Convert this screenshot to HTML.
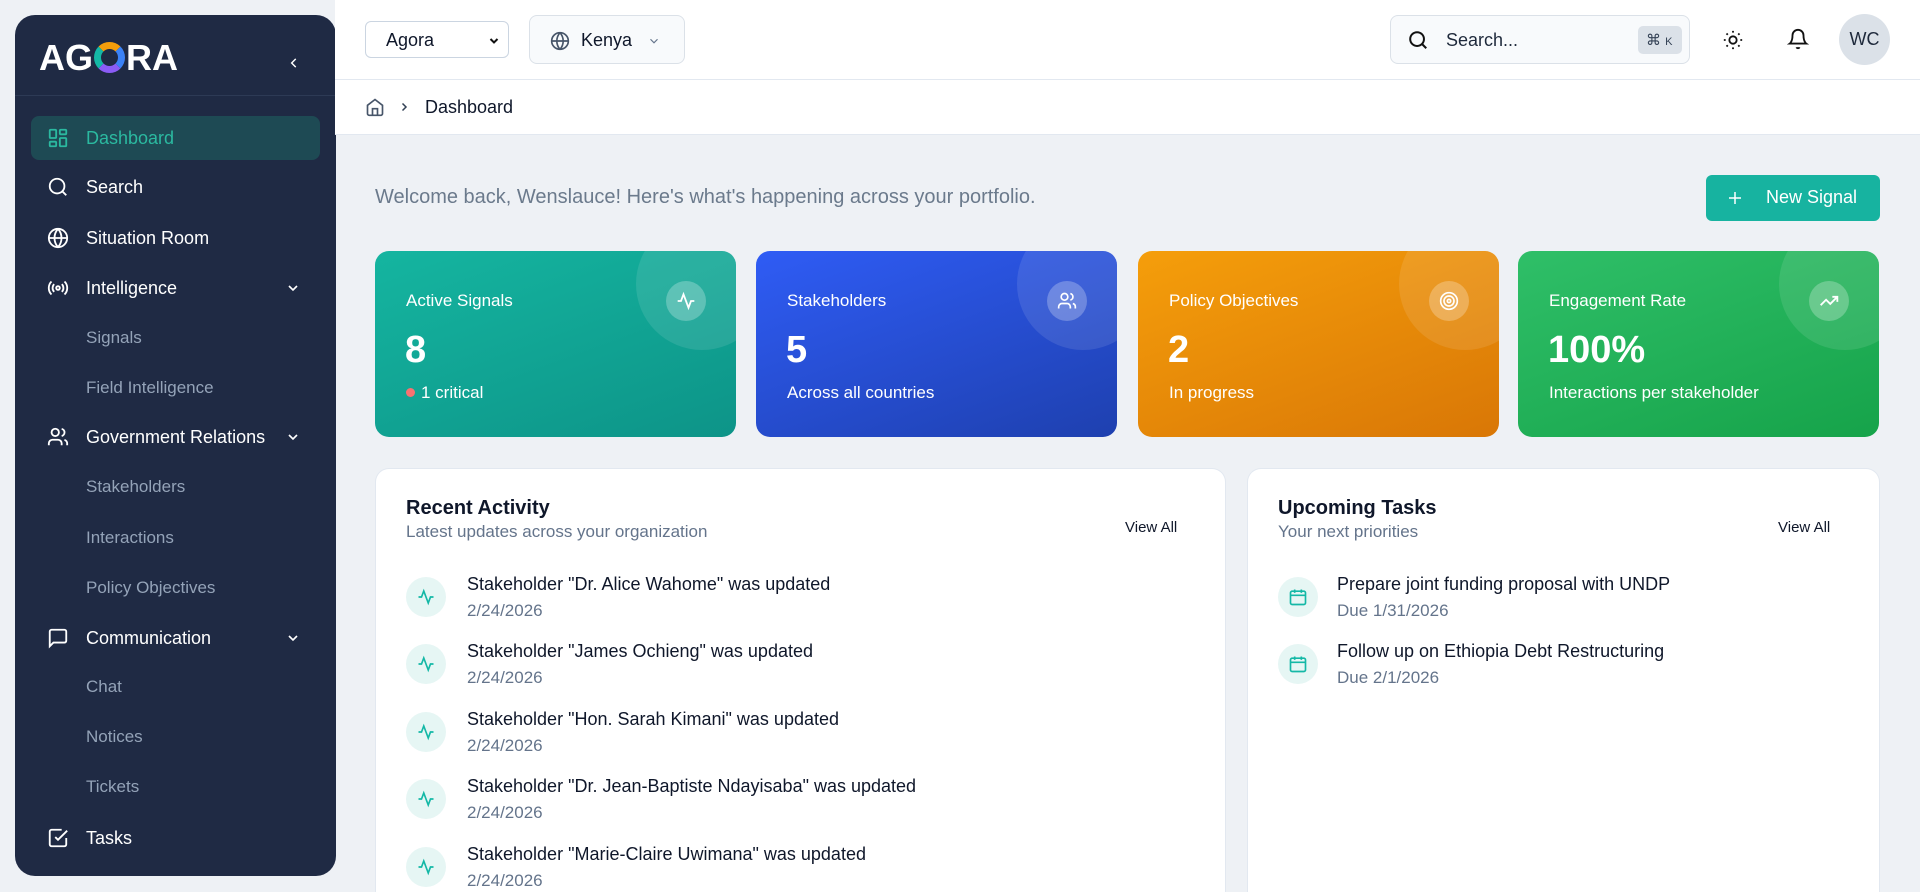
<!DOCTYPE html>
<html style="width:1920px;height:892px;overflow:hidden"><head><meta charset="utf-8"><style>
*{box-sizing:border-box;margin:0;padding:0}
body{width:1920px;height:892px;overflow:hidden;background:#eef1f5;font-family:"Liberation Sans",sans-serif;position:relative;color:#0f172a}
.a{position:absolute}
.sb{left:15px;top:15px;width:321px;height:861px;background:#1f2a44;border-radius:20px;overflow:hidden}
.mi{position:absolute;left:0;width:321px;height:40px;display:flex;align-items:center;color:#fff;font-size:18px}
.mi svg{position:absolute;left:32px}
.mi span{position:absolute;left:71px}
.sub{color:#94a3b8;font-size:17px}
.mi .chev{position:absolute;left:270px}
.top{left:335px;top:0;width:1585px;height:80px;background:#fff;border-bottom:1px solid #e2e8f0}
.bc{left:335px;top:80px;width:1585px;height:55px;background:#fff;border-bottom:1px solid #e2e8f0}
.card{top:251px;width:361px;height:186px;border-radius:14px;overflow:hidden;color:#fff}
.card .ring{position:absolute;left:261px;top:-33px;width:132px;height:132px;border-radius:50%;background:rgba(255,255,255,.1)}
.card .ic{position:absolute;left:291px;top:30px;width:40px;height:40px;border-radius:50%;background:rgba(255,255,255,.25);display:flex;align-items:center;justify-content:center}
.card .t{position:absolute;left:31px;top:40px;font-size:17px}
.card .n{position:absolute;left:30px;top:78px;font-size:38px;font-weight:bold}
.card .s{position:absolute;left:31px;top:132px;font-size:17px}
.panel{top:468px;height:424px;background:#fff;border:1px solid #e2e8f0;border-bottom:none;border-radius:14px 14px 0 0}
.ph{font-size:20px;font-weight:bold;color:#0f172a}
.ps{font-size:17px;color:#64748b}
.va{font-size:15px;color:#0f172a}
.it .c{position:absolute;width:40px;height:40px;border-radius:50%;background:#e6f6f4;display:flex;align-items:center;justify-content:center}
.it .l1{position:absolute;font-size:18px;color:#0f172a;white-space:nowrap}
.it .l2{position:absolute;font-size:17px;color:#64748b}
</style></head><body>

<div class="a sb">
  <div class="a" style="left:24px;top:22px;font-size:36px;font-weight:bold;color:#fff;letter-spacing:0px">AG<span style="display:inline-block;width:31px;height:31px;border-radius:50%;border:7px solid;border-color:#f59e0b #3b82f6 #8b5cf6 #14b8a6;vertical-align:-3px;margin:0 1px"></span>RA</div>
  <svg class="a" style="left:272px;top:41px" width="14" height="14" viewBox="0 0 24 24" fill="none" stroke="#fff" stroke-width="2.5"><path d="M15 5l-7 7 7 7"/></svg>
  <div class="a" style="left:0;top:80px;width:321px;height:1px;background:#2d3a55"></div>
  <div class="a" style="left:16px;top:101px;width:289px;height:44px;background:#1e4a54;border-radius:8px"></div>
  <div class="mi" style="top:103px;color:#2bb9a0"><svg width="22" height="22" viewBox="0 0 24 24" fill="none" stroke="#2bb9a0" stroke-width="2"><rect x="3" y="3" width="7" height="9" rx="1"/><rect x="14" y="3" width="7" height="5" rx="1"/><rect x="14" y="12" width="7" height="9" rx="1"/><rect x="3" y="16" width="7" height="5" rx="1"/></svg><span>Dashboard</span></div>
  <div class="mi" style="top:152px"><svg width="22" height="22" viewBox="0 0 24 24" fill="none" stroke="#fff" stroke-width="2"><circle cx="11" cy="11" r="8"/><path d="M21 21l-4.3-4.3"/></svg><span>Search</span></div>
  <div class="mi" style="top:203px"><svg width="22" height="22" viewBox="0 0 24 24" fill="none" stroke="#fff" stroke-width="2"><circle cx="12" cy="12" r="10"/><path d="M2 12h20M12 2a15 15 0 0 1 0 20M12 2a15 15 0 0 0 0 20"/></svg><span>Situation Room</span></div>
  <div class="mi" style="top:253px"><svg width="22" height="22" viewBox="0 0 24 24" fill="none" stroke="#fff" stroke-width="2"><circle cx="12" cy="12" r="2"/><path d="M16.2 7.8a6 6 0 0 1 0 8.4M7.8 16.2a6 6 0 0 1 0-8.4M19.1 4.9a10 10 0 0 1 0 14.2M4.9 19.1a10 10 0 0 1 0-14.2"/></svg><span>Intelligence</span><svg class="chev" width="16" height="16" viewBox="0 0 24 24" fill="none" stroke="#fff" stroke-width="2.5"><path d="M6 9l6 6 6-6"/></svg></div>
  <div class="mi sub" style="top:303px"><span>Signals</span></div>
  <div class="mi sub" style="top:353px"><span>Field Intelligence</span></div>
  <div class="mi" style="top:402px"><svg width="22" height="22" viewBox="0 0 24 24" fill="none" stroke="#fff" stroke-width="2"><circle cx="9" cy="7" r="4"/><path d="M2 21v-2a4 4 0 0 1 4-4h6a4 4 0 0 1 4 4v2M16 3.1a4 4 0 0 1 0 7.8M22 21v-2a4 4 0 0 0-3-3.9"/></svg><span>Government Relations</span><svg class="chev" width="16" height="16" viewBox="0 0 24 24" fill="none" stroke="#fff" stroke-width="2.5"><path d="M6 9l6 6 6-6"/></svg></div>
  <div class="mi sub" style="top:452px"><span>Stakeholders</span></div>
  <div class="mi sub" style="top:503px"><span>Interactions</span></div>
  <div class="mi sub" style="top:553px"><span>Policy Objectives</span></div>
  <div class="mi" style="top:603px"><svg width="22" height="22" viewBox="0 0 24 24" fill="none" stroke="#fff" stroke-width="2"><path d="M21 15a2 2 0 0 1-2 2H7l-4 4V5a2 2 0 0 1 2-2h14a2 2 0 0 1 2 2z"/></svg><span>Communication</span><svg class="chev" width="16" height="16" viewBox="0 0 24 24" fill="none" stroke="#fff" stroke-width="2.5"><path d="M6 9l6 6 6-6"/></svg></div>
  <div class="mi sub" style="top:652px"><span>Chat</span></div>
  <div class="mi sub" style="top:702px"><span>Notices</span></div>
  <div class="mi sub" style="top:752px"><span>Tickets</span></div>
  <div class="mi" style="top:803px"><svg width="22" height="22" viewBox="0 0 24 24" fill="none" stroke="#fff" stroke-width="2"><path d="M9 11l3 3L22 4"/><path d="M21 12v7a2 2 0 0 1-2 2H5a2 2 0 0 1-2-2V5a2 2 0 0 1 2-2h11"/></svg><span>Tasks</span></div>
</div>

<div class="a top"></div>
<div class="a" style="left:365px;top:21px;width:144px;height:37px;border:1px solid #cbd5e1;border-radius:6px;background:#fff;font-size:18px;padding:8px 0 0 20px">Agora<svg class="a" style="left:122px;top:13px" width="12" height="12" viewBox="0 0 24 24" fill="none" stroke="#111" stroke-width="4"><path d="M5 8l7 7 7-7"/></svg></div>
<div class="a" style="left:529px;top:15px;width:156px;height:49px;border:1px solid #dbe1e8;border-radius:8px;background:#f8fafc;font-size:18px;padding:14px 0 0 51px">Kenya
<svg class="a" style="left:20px;top:15px" width="20" height="20" viewBox="0 0 24 24" fill="none" stroke="#475569" stroke-width="2"><circle cx="12" cy="12" r="10"/><path d="M2 12h20M12 2a15 15 0 0 1 0 20M12 2a15 15 0 0 0 0 20"/></svg>
<svg class="a" style="left:117px;top:18px" width="14" height="14" viewBox="0 0 24 24" fill="none" stroke="#64748b" stroke-width="2"><path d="M6 9l6 6 6-6"/></svg></div>

<div class="a" style="left:1390px;top:15px;width:300px;height:49px;border:1px solid #dbe1e8;border-radius:8px;background:#f8fafc">
<svg class="a" style="left:16px;top:13px" width="22" height="22" viewBox="0 0 24 24" fill="none" stroke="#111" stroke-width="2.2"><circle cx="11" cy="11" r="7.5"/><path d="M21 21l-4.5-4.5"/></svg>
<div class="a" style="left:55px;top:14px;font-size:18px;color:#1e293b">Search...</div>
<div class="a" style="left:247px;top:10px;width:44px;height:28px;background:#dbe1e8;border-radius:5px;font-size:15px;padding:5px 0 0 8px;color:#334155">⌘ <span style="font-size:11px">K</span></div>
</div>
<svg class="a" style="left:1722px;top:29px" width="22" height="22" viewBox="0 0 24 24" fill="none" stroke="#111" stroke-width="2"><circle cx="12" cy="12" r="4"/><path d="M12 2v2M12 20v2M4.9 4.9l1.4 1.4M17.7 17.7l1.4 1.4M2 12h2M20 12h2M4.9 19.1l1.4-1.4M17.7 6.3l1.4-1.4"/></svg>
<svg class="a" style="left:1787px;top:28px" width="22" height="22" viewBox="0 0 24 24" fill="none" stroke="#111" stroke-width="2"><path d="M6 8a6 6 0 0 1 12 0c0 7 3 9 3 9H3s3-2 3-9M10.3 21a1.9 1.9 0 0 0 3.4 0"/></svg>
<div class="a" style="left:1839px;top:14px;width:51px;height:51px;border-radius:50%;background:#dbe1e8;font-size:18px;color:#1e293b;text-align:center;line-height:51px">WC</div>

<div class="a bc"></div>
<svg class="a" style="left:365px;top:97px" width="20" height="20" viewBox="0 0 24 24" fill="none" stroke="#475569" stroke-width="2"><path d="M3 10l9-7 9 7v10a2 2 0 0 1-2 2H5a2 2 0 0 1-2-2z"/><path d="M9 22v-8h6v8"/></svg>
<svg class="a" style="left:398px;top:101px" width="12" height="12" viewBox="0 0 24 24" fill="none" stroke="#334155" stroke-width="3"><path d="M9 5l7 7-7 7"/></svg>
<div class="a" style="left:425px;top:97px;font-size:18px">Dashboard</div>

<div class="a" style="left:375px;top:186px;font-size:20px;color:#6b7a8c">Welcome back, Wenslauce! Here's what's happening across your portfolio.</div>
<div class="a" style="left:1706px;top:175px;width:174px;height:46px;background:#17b3a0;border-radius:6px;color:#fff;font-size:18px;padding:12px 0 0 60px">New Signal
<svg class="a" style="left:20px;top:14px" width="18" height="18" viewBox="0 0 24 24" fill="none" stroke="#fff" stroke-width="2"><path d="M12 4v16M4 12h16"/></svg></div>

<div class="a card" style="left:375px;background:linear-gradient(160deg,#15b5a0,#0d9488)"><div class="ring"></div><div class="ic"><svg width="20" height="20" viewBox="0 0 24 24" fill="none" stroke="#fff" stroke-width="2.2"><path d="M22 12h-4l-3 8-6-16-3 8H2"/></svg></div><div class="t">Active Signals</div><div class="n">8</div><div class="s"><span style="display:inline-block;width:9px;height:9px;border-radius:50%;background:#f87171;margin-right:6px;vertical-align:1px"></span>1 critical</div></div>
<div class="a card" style="left:756px;background:linear-gradient(160deg,#2f5cf5,#1e40af)"><div class="ring"></div><div class="ic"><svg width="20" height="20" viewBox="0 0 24 24" fill="none" stroke="#fff" stroke-width="2"><circle cx="9" cy="7" r="4"/><path d="M2 21v-2a4 4 0 0 1 4-4h6a4 4 0 0 1 4 4v2M16 3.1a4 4 0 0 1 0 7.8M22 21v-2a4 4 0 0 0-3-3.9"/></svg></div><div class="t">Stakeholders</div><div class="n">5</div><div class="s">Across all countries</div></div>
<div class="a card" style="left:1138px;background:linear-gradient(160deg,#f59e0b,#d97706)"><div class="ring"></div><div class="ic"><svg width="20" height="20" viewBox="0 0 24 24" fill="none" stroke="#fff" stroke-width="2"><circle cx="12" cy="12" r="10"/><circle cx="12" cy="12" r="6"/><circle cx="12" cy="12" r="2"/></svg></div><div class="t">Policy Objectives</div><div class="n">2</div><div class="s">In progress</div></div>
<div class="a card" style="left:1518px;background:linear-gradient(160deg,#2fbf68,#16a34a)"><div class="ring"></div><div class="ic"><svg width="20" height="20" viewBox="0 0 24 24" fill="none" stroke="#fff" stroke-width="2.2"><path d="M22 7l-8.5 8.5-5-5L2 17M16 7h6v6"/></svg></div><div class="t">Engagement Rate</div><div class="n">100%</div><div class="s">Interactions per stakeholder</div></div>

<div class="a panel" style="left:375px;width:851px">
  <div class="a ph" style="left:30px;top:28px">Recent Activity</div>
  <div class="a ps" style="left:30px;top:53px">Latest updates across your organization</div>
  <div class="a va" style="left:749px;top:50px">View All</div>
  <div class="it">
  <div class="c" style="left:30px;top:108px"><svg width="18" height="18" viewBox="0 0 24 24" fill="none" stroke="#14b8a6" stroke-width="2.2"><path d="M22 12h-4l-3 8-6-16-3 8H2"/></svg></div>
  <div class="l1" style="left:91px;top:105px">Stakeholder "Dr. Alice Wahome" was updated</div><div class="l2" style="left:91px;top:132px">2/24/2026</div>
  <div class="c" style="left:30px;top:175px"><svg width="18" height="18" viewBox="0 0 24 24" fill="none" stroke="#14b8a6" stroke-width="2.2"><path d="M22 12h-4l-3 8-6-16-3 8H2"/></svg></div>
  <div class="l1" style="left:91px;top:172px">Stakeholder "James Ochieng" was updated</div><div class="l2" style="left:91px;top:199px">2/24/2026</div>
  <div class="c" style="left:30px;top:243px"><svg width="18" height="18" viewBox="0 0 24 24" fill="none" stroke="#14b8a6" stroke-width="2.2"><path d="M22 12h-4l-3 8-6-16-3 8H2"/></svg></div>
  <div class="l1" style="left:91px;top:240px">Stakeholder "Hon. Sarah Kimani" was updated</div><div class="l2" style="left:91px;top:267px">2/24/2026</div>
  <div class="c" style="left:30px;top:310px"><svg width="18" height="18" viewBox="0 0 24 24" fill="none" stroke="#14b8a6" stroke-width="2.2"><path d="M22 12h-4l-3 8-6-16-3 8H2"/></svg></div>
  <div class="l1" style="left:91px;top:307px">Stakeholder "Dr. Jean-Baptiste Ndayisaba" was updated</div><div class="l2" style="left:91px;top:334px">2/24/2026</div>
  <div class="c" style="left:30px;top:378px"><svg width="18" height="18" viewBox="0 0 24 24" fill="none" stroke="#14b8a6" stroke-width="2.2"><path d="M22 12h-4l-3 8-6-16-3 8H2"/></svg></div>
  <div class="l1" style="left:91px;top:375px">Stakeholder "Marie-Claire Uwimana" was updated</div><div class="l2" style="left:91px;top:402px">2/24/2026</div>
  </div>
</div>

<div class="a panel" style="left:1247px;width:633px">
  <div class="a ph" style="left:30px;top:28px">Upcoming Tasks</div>
  <div class="a ps" style="left:30px;top:53px">Your next priorities</div>
  <div class="a va" style="left:530px;top:50px">View All</div>
  <div class="it">
  <div class="c" style="left:30px;top:108px"><svg width="20" height="20" viewBox="0 0 24 24" fill="none" stroke="#14b8a6" stroke-width="2"><rect x="3" y="5" width="18" height="16" rx="2"/><path d="M8 3v4M16 3v4M3 10h18"/></svg></div>
  <div class="l1" style="left:89px;top:105px">Prepare joint funding proposal with UNDP</div><div class="l2" style="left:89px;top:132px">Due 1/31/2026</div>
  <div class="c" style="left:30px;top:175px"><svg width="20" height="20" viewBox="0 0 24 24" fill="none" stroke="#14b8a6" stroke-width="2"><rect x="3" y="5" width="18" height="16" rx="2"/><path d="M8 3v4M16 3v4M3 10h18"/></svg></div>
  <div class="l1" style="left:89px;top:172px">Follow up on Ethiopia Debt Restructuring</div><div class="l2" style="left:89px;top:199px">Due 2/1/2026</div>
  </div>
</div>
</body></html>
